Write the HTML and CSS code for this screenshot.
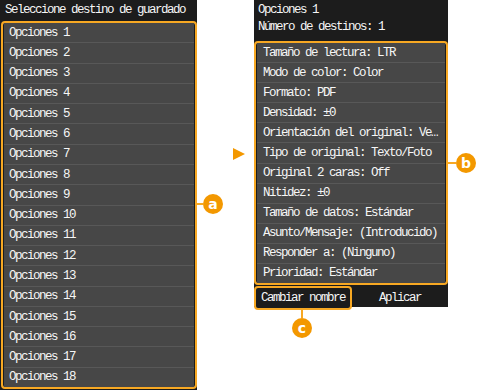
FILE: index.html
```
<!DOCTYPE html>
<html lang="es">
<head>
  <meta charset="UTF-8" />
  <title>Seleccione destino de guardado</title>
  <link rel="stylesheet" href="styles.css">
</head>
<body>
  <div class="page">
    <div class="screen screen-left">
      <div class="title">Seleccione destino de guardado</div>
      <div class="list list-left">
        <div class="row">Opciones 1</div>
        <div class="row">Opciones 2</div>
        <div class="row">Opciones 3</div>
        <div class="row">Opciones 4</div>
        <div class="row">Opciones 5</div>
        <div class="row">Opciones 6</div>
        <div class="row">Opciones 7</div>
        <div class="row">Opciones 8</div>
        <div class="row">Opciones 9</div>
        <div class="row">Opciones 10</div>
        <div class="row">Opciones 11</div>
        <div class="row">Opciones 12</div>
        <div class="row">Opciones 13</div>
        <div class="row">Opciones 14</div>
        <div class="row">Opciones 15</div>
        <div class="row">Opciones 16</div>
        <div class="row">Opciones 17</div>
        <div class="row">Opciones 18</div>
      </div>
    </div>

    <div class="screen screen-right">
      <div class="info">
        <div>Opciones 1</div>
        <div>Número de destinos: 1</div>
      </div>
      <div class="list list-right">
        <div class="row">Tamaño de lectura: LTR</div>
        <div class="row">Modo de color: Color</div>
        <div class="row">Formato: PDF</div>
        <div class="row">Densidad: ±0</div>
        <div class="row">Orientación del original: Ve…</div>
        <div class="row">Tipo de original: Texto/Foto</div>
        <div class="row">Original 2 caras: Off</div>
        <div class="row">Nitidez: ±0</div>
        <div class="row">Tamaño de datos: Estándar</div>
        <div class="row">Asunto/Mensaje: (Introducido)</div>
        <div class="row">Responder a: (Ninguno)</div>
        <div class="row">Prioridad: Estándar</div>
      </div>
      <div class="buttons">
        <div class="btn btn-marked">Cambiar nombre</div>
        <div class="btn">Aplicar</div>
      </div>
    </div>

    <!-- callouts -->
    <div class="arrow"></div>
    <div class="callout callout-a"><span class="lead"></span><span class="dot">a</span></div>
    <div class="callout callout-b"><span class="lead"></span><span class="dot">b</span></div>
    <div class="callout-c"><span class="lead-v"></span><span class="dot">c</span></div>
  </div>
</body>
</html>
```

FILE: styles.css
```
body {
  margin: 0;
  background: #fff;
  font-family: "Liberation Mono", "DejaVu Sans Mono", monospace;
  font-size: 12.5px;
  letter-spacing: -1.5px;
  color: #f6f6f6;
}
.page {
  position: relative;
  width: 483px;
  height: 391px;
  display: flex;
  align-items: flex-start;
}
.screen {
  background: #1c1c1c;
  display: flex;
  flex-direction: column;
}
.screen-left {
  width: 197px;
  height: 390px;
}
.title {
  height: 21px;
  line-height: 20px;
  padding-left: 5px;
  white-space: nowrap;
}
.list {
  box-sizing: border-box;
  border: 2px solid #f7a823;
  border-radius: 4px;
  display: grid;
  gap: 1px;
  background: #585858;
  padding: 0 1px;
  box-shadow: inset 1px 0 0 #1c1c1c, inset -1px 0 0 #1c1c1c;
}
.list-left {
  margin-left: 1px;
  width: 196px;
  height: 368px;
  grid-template-rows: repeat(18, 1fr);
}
.row {
  background: #474747;
  padding-left: 5px;
  display: flex;
  align-items: center;
  white-space: nowrap;
  overflow: hidden;
}
.screen-right {
  margin-left: 57px;
  width: 194px;
}
.info {
  height: 41px;
  padding: 2px 0 0 4px;
  box-sizing: border-box;
  line-height: 17px;
}
.list-right {
  height: 244px;
  grid-template-rows: repeat(12, 1fr);
}
.list-right .row {
  padding-left: 6px;
}
.buttons {
  display: grid;
  grid-template-columns: 98px 1fr;
  height: 22px;
  background: #1c1c1c;
}
.btn {
  display: flex;
  align-items: center;
  justify-content: center;
}
.btn-marked {
  box-sizing: border-box;
  height: 24px;
  border: 2px solid #f7a823;
  border-radius: 4px;
  margin-top: 1px;
  background: #1c1c1c;
}
.arrow {
  position: absolute;
  left: 233px;
  top: 148px;
  width: 0;
  height: 0;
  border-top: 6.5px solid transparent;
  border-bottom: 6.5px solid transparent;
  border-left: 12px solid #f39800;
}
.callout {
  position: absolute;
  display: flex;
  align-items: center;
}
.callout .lead {
  height: 1.5px;
  background: #f7a823;
}
.dot {
  width: 20px;
  height: 20px;
  border-radius: 50%;
  background: #f39800;
  color: #fff;
  font-family: "DejaVu Sans", sans-serif;
  font-weight: bold;
  font-size: 14px;
  letter-spacing: 0;
  display: flex;
  align-items: center;
  justify-content: center;
  line-height: 1;
  padding-bottom: 1px;
  box-sizing: border-box;
}
.callout-a {
  left: 197px;
  top: 194px;
}
.callout-a .lead {
  width: 6px;
}
.callout-b {
  left: 448px;
  top: 153px;
}
.callout-b .lead {
  width: 8px;
}
.callout-c {
  position: absolute;
  left: 292px;
  top: 309px;
  display: flex;
  flex-direction: column;
  align-items: center;
}
.lead-v {
  width: 1.5px;
  height: 9px;
  background: #f7a823;
}
```
